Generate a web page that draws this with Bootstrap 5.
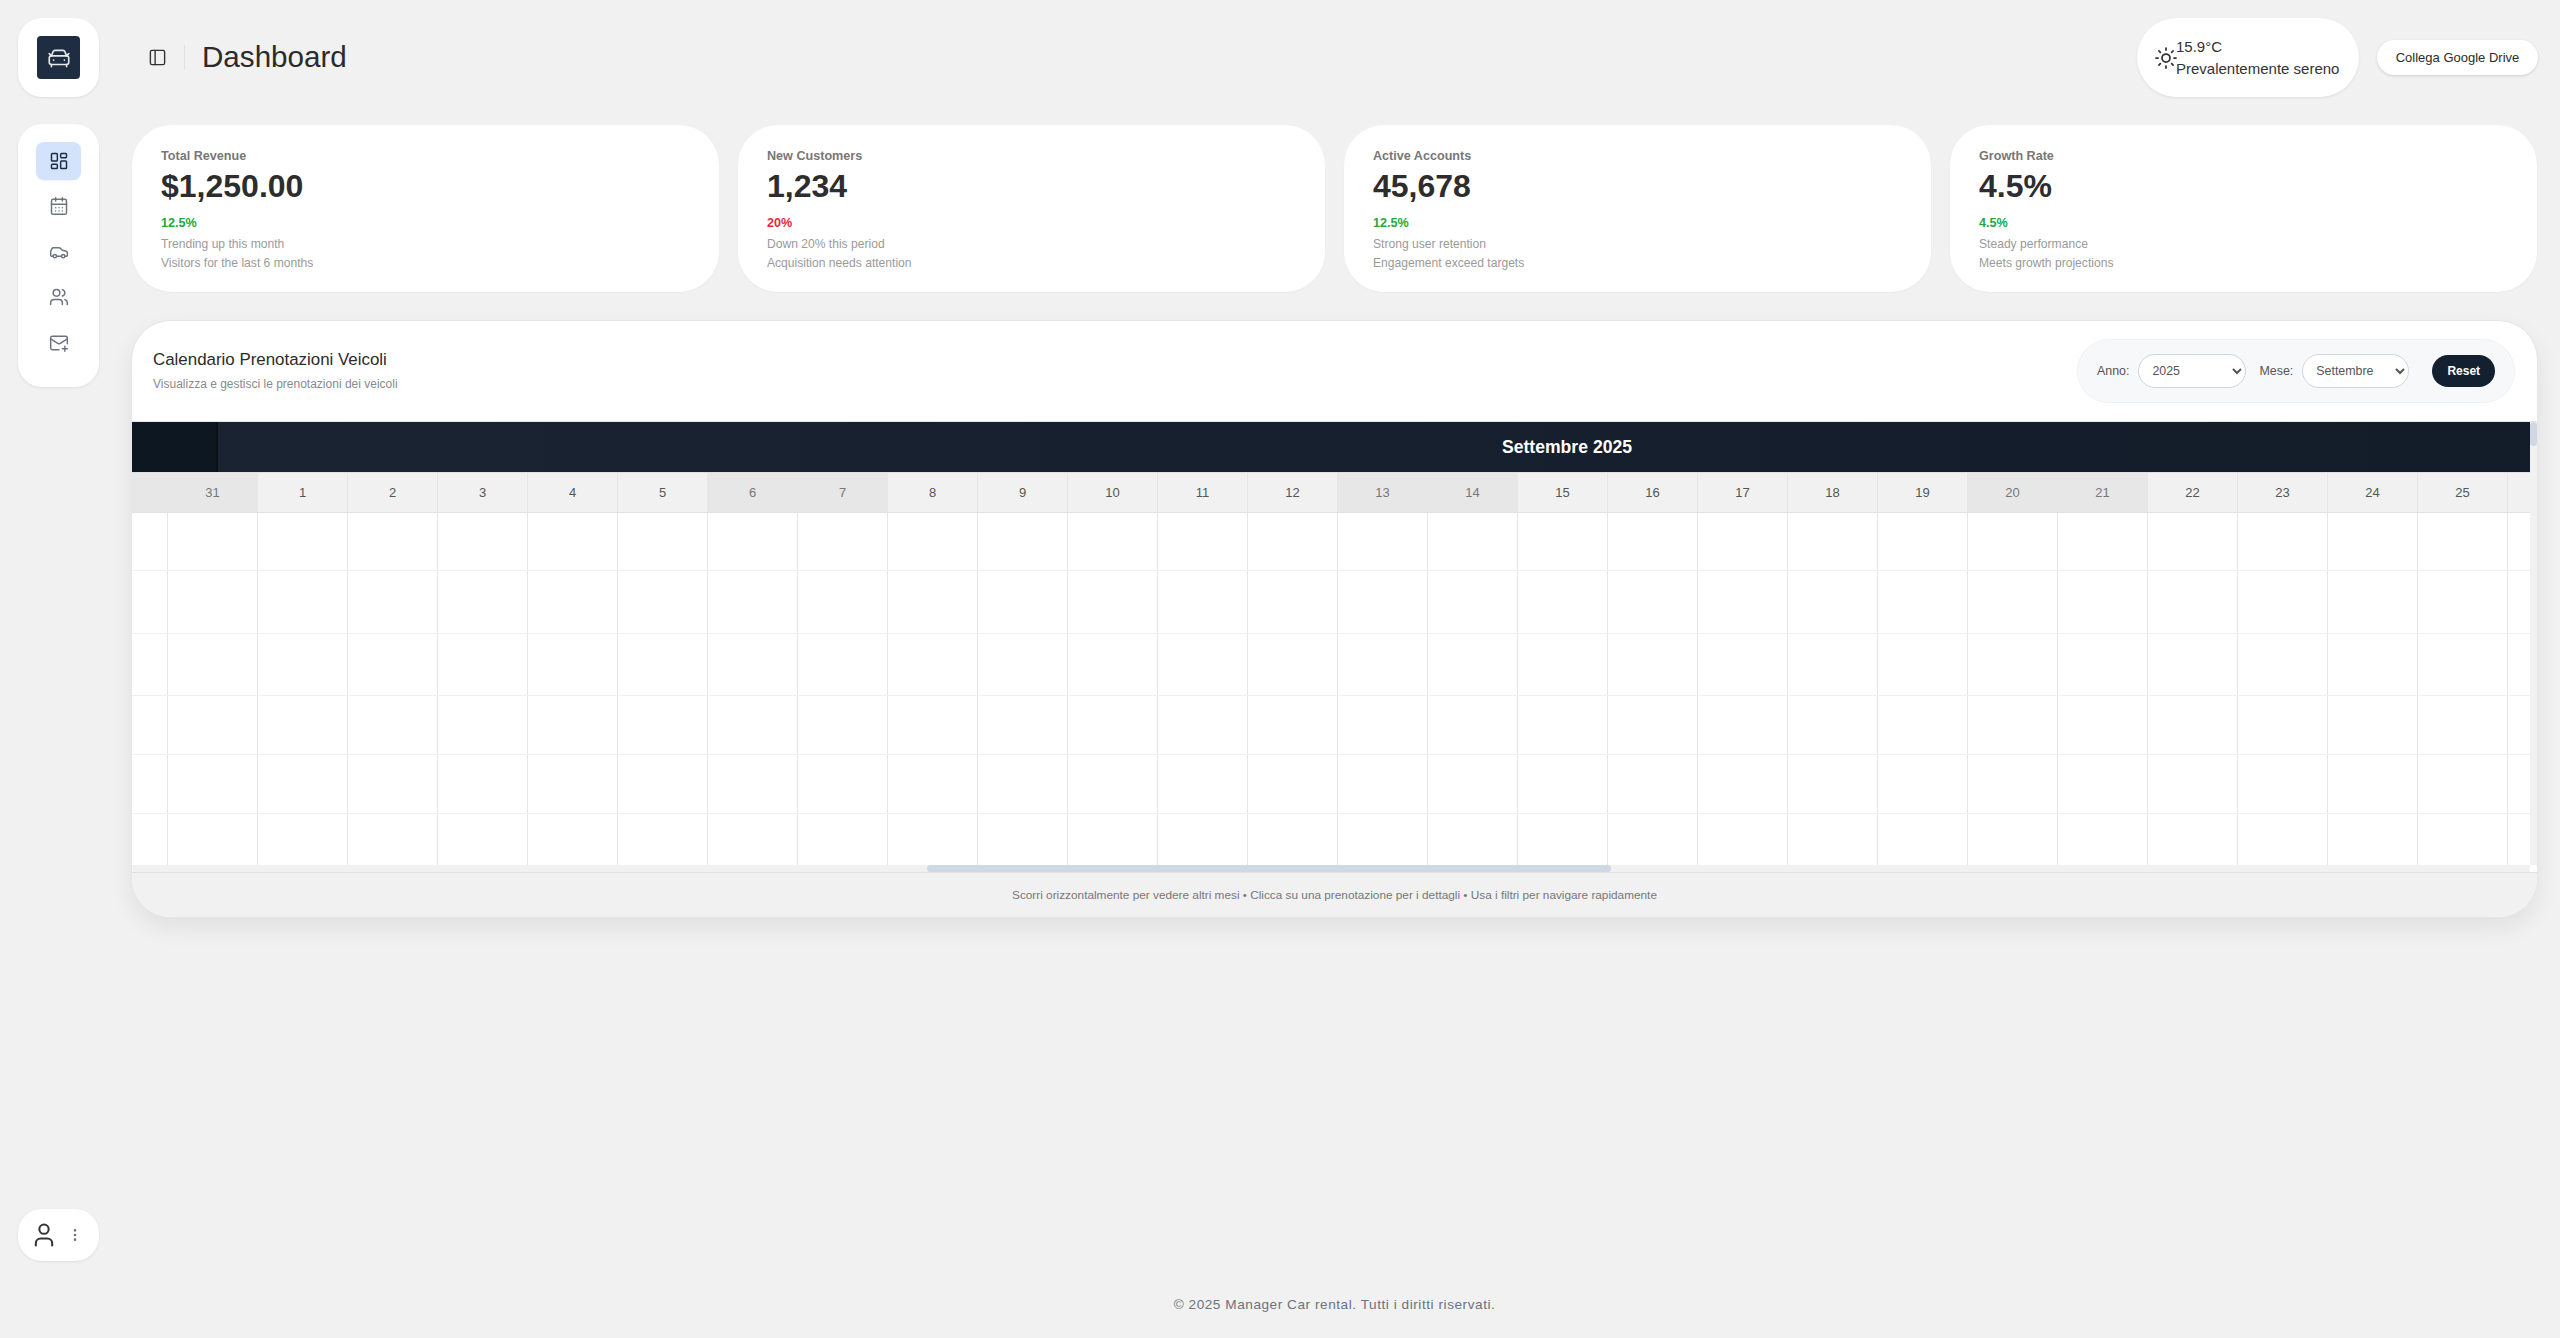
<!DOCTYPE html>
<html lang="it">
<head>
<meta charset="utf-8">
<title>Dashboard</title>
<link href="https://cdn.jsdelivr.net/npm/bootstrap@5.3.0/dist/css/bootstrap.min.css" rel="stylesheet">
<style>
body{background:#f1f1f1;font-family:"Liberation Sans",Arial,sans-serif;color:#2b2b2b;overflow:hidden}
.ico{fill:none;stroke:currentColor;stroke-width:1.75;stroke-linecap:round;stroke-linejoin:round;flex:none}
.side{width:131px;height:1338px;padding:18px 0 77px 18px}
.side-box{width:81px;background:#fff;border-radius:24px;box-shadow:0 1px 3px rgba(0,0,0,.08)}
.logo-box{height:79px;margin-bottom:27px}
.logo-sq{width:43px;height:43px;background:#1f2d42;border-radius:4px;color:#e8e8e8}
.logo-sq .ico{stroke-width:1.5}
.nav-box{height:263px;padding:18px;display:flex;flex-direction:column;align-items:center}
.nav-it{width:45px;height:38px;margin-bottom:7.5px;border-radius:8px;color:#6b7280}
.nav-it.on{background:#d3e3fb;color:#1f2d42;box-shadow:0 1px 2px rgba(0,0,0,.05)}
.user-box{height:52px;color:#333;padding-left:12px}
.user-box .dots{color:#6b7280;margin-left:9px;stroke-width:2}
.main-col{width:2407px;height:1338px}
.top-bar{height:125px;padding:18px 0 0 1px}
.title-wrap{height:79px}
.ham{margin-left:16px;color:#333}
.vsep{width:1px;height:25px;background:#e2e2e2;margin:0 17px}
.page-title{font-size:29.6px;font-weight:400;margin:0 0 2px;color:#2b2b2b}
.wx{width:222px;height:79px;background:#fff;border-radius:40px;box-shadow:0 1px 3px rgba(0,0,0,.08);padding-left:17px;font-size:15px;line-height:22px;color:#333}
.wx .ico{margin-right:-2px}
.drive{width:161px;height:35px;margin:22px 0 0 18px;background:#fff;border-radius:18px;border:0;box-shadow:0 1px 3px rgba(0,0,0,.14);font-size:13px;font-weight:500;color:#2b2b2b}
.stats{display:grid;grid-template-columns:repeat(4,1fr);gap:19px;padding:0 1px;margin-bottom:28px}
.stat{height:167px;background:#fff;border-radius:40px;padding:22px 29px;box-shadow:0 1px 2px rgba(0,0,0,.03)}
.stat-t{font-size:12.6px;font-weight:700;color:#777;line-height:18px}
.stat-v{font-size:32px;font-weight:700;line-height:42px;color:#2d2d2d;margin:0 0 7px}
.stat-p{font-size:12.6px;font-weight:700;line-height:18px;margin-bottom:3px}
.up{color:#22a93f}.down{color:#e5293b}
.stat-d{font-size:12.1px;line-height:19px;color:#9a9a9a}
.cal{height:598px;background:#fff;border:1px solid #e4e6ea;border-radius:40px;overflow:hidden;box-shadow:0 10px 25px rgba(0,0,0,.07)}
.cal-head{height:101px;padding:0 22px 0 21px;border-bottom:1px solid #e5e7eb}
.cal-title{font-size:16.9px;font-weight:500;margin:0 0 6px;color:#2b2b2b;line-height:20px}
.cal-sub{font-size:12px;color:#8a8a8a;line-height:16px}
.filters{width:438px;height:64px;background:#f7f8fa;border:1px solid #eef0f3;border-radius:32px;padding:0 19px;font-size:12.4px;color:#555}
.pick{width:108px;height:34px;border:1px solid #d1d5db;border-radius:17px;padding:0 0 0 9px;font-size:12.4px;color:#555;background-color:#fff;margin:0 14px 0 9px}
.reset{width:63px;height:32px;background:#13202f;color:#fff;border:0;border-radius:16px;font-size:12px;font-weight:700;margin-left:9px}
.cal-body{height:443px}
.view{width:2398px;overflow:hidden;background:#fff}
.rail-v{width:7px;background:#f1f1f1}
.thumb-v{width:7px;height:24px;background:#cfd8e3;border-radius:4px}
.rail-row{height:7px;background:#fff}
.rail-h{width:2398px;height:7px;background:#f1f1f1}
.thumb-h{width:684px;height:7px;margin-left:795px;background:#cfd8e3;border-radius:4px}
.m-row{height:51px;border-bottom:1px solid #e0e0e0;background:#101a27}
.m-pin{width:86px;flex:none;background:#0d1721;border-right:2px solid #0a1016}
.m-prev{width:40px;flex:none;background:#1a2332}
.m-cur{width:2700px;flex:none;background:linear-gradient(90deg,#1a2332,#111b28);color:#fff;font-size:17.6px;font-weight:700;padding-right:82px}
.d-row{height:40px;margin-left:-54px;border-bottom:1px solid #e2e2e2}
.d-cell{width:90px;flex:none;border-right:1px solid #e6e6e6;background:#f1f1f1;color:#555;font-size:13px;font-weight:500}
.d-cell.we{background:#e7e7e7;border-right-color:#e7e7e7;color:#777}
.b-row{margin-left:-54px;border-bottom:1px solid #f0f0f0}
.b-row>div{width:90px;flex:none;border-right:1px solid #e6e6e6}
.r1{height:58px}.r2{height:63px}.r3{height:62px}.r4{height:59px}.r5{height:59px}.r6{height:59px}
.cal-foot{height:45px;padding-top:2px;background:#f1f1f1;border-top:1px solid #e0e0e0;font-size:11.8px;color:#777}
.copy{font-size:13.6px;color:#6b7280;padding-bottom:23px;letter-spacing:.55px}
</style>
</head>
<body>
<div class="d-flex">
  <aside class="side d-flex flex-column">
    <div class="side-box logo-box d-flex align-items-center justify-content-center">
      <div class="logo-sq d-flex align-items-center justify-content-center">
        <svg class="ico" width="26" height="26" viewBox="0 0 24 24"><path d="m21 8-2 2-1.5-3.7A2 2 0 0 0 15.646 5H8.4a2 2 0 0 0-1.903 1.257L5 10 3 8"/><path d="M7 14h.01M17 14h.01"/><rect x="3" y="10" width="18" height="8" rx="2"/><path d="M5 18v2M19 18v2"/></svg>
      </div>
    </div>
    <nav class="side-box nav-box">
      <a class="nav-it on d-flex align-items-center justify-content-center"><svg class="ico" width="20" height="20" viewBox="0 0 24 24"><rect x="3" y="3" width="7" height="9" rx="1"/><rect x="14" y="3" width="7" height="5" rx="1"/><rect x="14" y="12" width="7" height="9" rx="1"/><rect x="3" y="16" width="7" height="5" rx="1"/></svg></a>
      <a class="nav-it d-flex align-items-center justify-content-center"><svg class="ico" width="20" height="20" viewBox="0 0 24 24"><path d="M8 2v4M16 2v4"/><rect x="3" y="4" width="18" height="18" rx="2"/><path d="M3 10h18M8 14h.01M12 14h.01M16 14h.01M8 18h.01M12 18h.01M16 18h.01"/></svg></a>
      <a class="nav-it d-flex align-items-center justify-content-center"><svg class="ico" width="20" height="20" viewBox="0 0 24 24"><path d="M19 17h2c.6 0 1-.4 1-1v-3c0-.9-.7-1.7-1.5-1.9C18.7 10.6 16 10 16 10s-1.3-1.4-2.2-2.3c-.5-.4-1.1-.7-1.8-.7H5c-.6 0-1.1.4-1.4.9l-1.4 2.9A3.7 3.7 0 0 0 2 12v4c0 .6.4 1 1 1h2"/><circle cx="7" cy="17" r="2"/><path d="M9 17h6"/><circle cx="17" cy="17" r="2"/></svg></a>
      <a class="nav-it d-flex align-items-center justify-content-center"><svg class="ico" width="20" height="20" viewBox="0 0 24 24"><path d="M16 21v-2a4 4 0 0 0-4-4H6a4 4 0 0 0-4 4v2"/><circle cx="9" cy="7" r="4"/><path d="M22 21v-2a4 4 0 0 0-3-3.87M16 3.13a4 4 0 0 1 0 7.75"/></svg></a>
      <a class="nav-it d-flex align-items-center justify-content-center"><svg class="ico" width="20" height="20" viewBox="0 0 24 24"><path d="M22 13V6a2 2 0 0 0-2-2H4a2 2 0 0 0-2 2v12c0 1.1.9 2 2 2h8"/><path d="m22 7-8.97 5.7a1.94 1.94 0 0 1-2.06 0L2 7M19 16v6M16 19h6"/></svg></a>
    </nav>
    <div class="side-box user-box mt-auto d-flex align-items-center">
      <svg class="ico" width="28" height="28" viewBox="0 0 24 24"><path d="M19 21v-2a4 4 0 0 0-4-4H9a4 4 0 0 0-4 4v2"/><circle cx="12" cy="7" r="4"/></svg>
      <svg class="ico dots" width="16" height="16" viewBox="0 0 24 24"><circle cx="12" cy="5" r="1"/><circle cx="12" cy="12" r="1"/><circle cx="12" cy="19" r="1"/></svg>
    </div>
  </aside>
  <div class="main-col d-flex flex-column">
    <header class="top-bar d-flex align-items-start">
      <div class="title-wrap d-flex align-items-center flex-grow-1">
        <svg class="ico ham" width="19" height="19" viewBox="0 0 24 24"><rect x="3" y="3" width="18" height="18" rx="2"/><path d="M9 3v18"/></svg>
        <span class="vsep"></span>
        <h1 class="page-title">Dashboard</h1>
      </div>
      <div class="wx d-flex align-items-center">
        <svg class="ico" width="24" height="24" viewBox="0 0 24 24"><circle cx="12" cy="12" r="4"/><path d="M12 2v2M12 20v2M4.93 4.93l1.41 1.41M17.66 17.66l1.41 1.41M2 12h2M20 12h2M6.34 17.66l-1.41 1.41M19.07 4.93l-1.41 1.41"/></svg>
        <div><div>15.9°C</div><div>Prevalentemente sereno</div></div>
      </div>
      <button class="drive">Collega Google Drive</button>
    </header>
    <section class="stats">
      <div class="stat"><div class="stat-t">Total Revenue</div><div class="stat-v">$1,250.00</div><div class="stat-p up">12.5%</div><div class="stat-d">Trending up this month</div><div class="stat-d">Visitors for the last 6 months</div></div>
      <div class="stat"><div class="stat-t">New Customers</div><div class="stat-v">1,234</div><div class="stat-p down">20%</div><div class="stat-d">Down 20% this period</div><div class="stat-d">Acquisition needs attention</div></div>
      <div class="stat"><div class="stat-t">Active Accounts</div><div class="stat-v">45,678</div><div class="stat-p up">12.5%</div><div class="stat-d">Strong user retention</div><div class="stat-d">Engagement exceed targets</div></div>
      <div class="stat"><div class="stat-t">Growth Rate</div><div class="stat-v">4.5%</div><div class="stat-p up">4.5%</div><div class="stat-d">Steady performance</div><div class="stat-d">Meets growth projections</div></div>
    </section>
    <section class="cal">
      <div class="cal-head d-flex align-items-center justify-content-between">
        <div><h2 class="cal-title">Calendario Prenotazioni Veicoli</h2><div class="cal-sub">Visualizza e gestisci le prenotazioni dei veicoli</div></div>
        <div class="filters d-flex align-items-center">
          <span>Anno:</span>
          <select class="pick"><option>2025</option></select>
          <span>Mese:</span>
          <select class="pick"><option>Settembre</option></select>
          <button class="reset">Reset</button>
        </div>
      </div>
      <div class="cal-body d-flex">
        <div class="view">
          <div class="m-row d-flex">
            <div class="m-pin"></div>
            <div class="m-prev"></div>
            <div class="m-cur d-flex align-items-center justify-content-center">Settembre 2025</div>
          </div>
          <div class="d-row d-flex" id="dayRow"></div>
          <div id="bodyRows"></div>
        </div>
        <div class="rail-v"><div class="thumb-v"></div></div>
      </div>
      <div class="rail-row"><div class="rail-h"><div class="thumb-h"></div></div></div>
      <div class="cal-foot d-flex align-items-center justify-content-center">Scorri orizzontalmente per vedere altri mesi • Clicca su una prenotazione per i dettagli • Usa i filtri per navigare rapidamente</div>
    </section>
    <footer class="copy mt-auto text-center">© 2025 Manager Car rental. Tutti i diritti riservati.</footer>
  </div>
</div>
<script src="https://cdn.jsdelivr.net/npm/bootstrap@5.3.0/dist/js/bootstrap.bundle.min.js"></script>
<script>
var labels=['',31];for(var i=1;i<=25;i++)labels.push(i);labels.push('');
var we=['',31,6,7,13,14,20,21];
document.getElementById('dayRow').innerHTML=labels.map(function(n,i){var w=(we.indexOf(n)>=0&&i<27)?' we':'';return '<div class="d-cell d-flex align-items-center justify-content-center'+w+'">'+n+'</div>';}).join('');
var cells=labels.map(function(){return '<div></div>';}).join(''),html='';
for(var r=1;r<=6;r++)html+='<div class="b-row d-flex r'+r+'">'+cells+'</div>';
document.getElementById('bodyRows').innerHTML=html;
</script>
</body>
</html>
